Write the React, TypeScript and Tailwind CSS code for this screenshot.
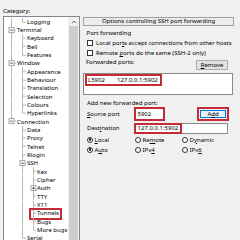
import React from "react";

type Line = [number, "f" | "t"];
type Row = { label: string; level: 0 | 1 | 2; exp?: "-" | "+"; lines: Line[]; mark?: boolean };

// tree columns, relative to the inside of the tree box
const L0 = 7;
const L1 = 18;
const L2 = 29;
const TEXT_X = [13, 23, 33];
const LEVEL_X = [L0, L1, L2];
const ROW_H = 8.33;

const rows: Row[] = [
  { label: "Logging", level: 1, lines: [[L0, "f"], [L1, "t"]] },
  { label: "Terminal", level: 0, exp: "-", lines: [[L0, "f"]] },
  { label: "Keyboard", level: 1, lines: [[L0, "f"], [L1, "f"]] },
  { label: "Bell", level: 1, lines: [[L0, "f"], [L1, "f"]] },
  { label: "Features", level: 1, lines: [[L0, "f"], [L1, "t"]] },
  { label: "Window", level: 0, exp: "-", lines: [[L0, "f"]] },
  { label: "Appearance", level: 1, lines: [[L0, "f"], [L1, "f"]] },
  { label: "Behaviour", level: 1, lines: [[L0, "f"], [L1, "f"]] },
  { label: "Translation", level: 1, lines: [[L0, "f"], [L1, "f"]] },
  { label: "Selection", level: 1, lines: [[L0, "f"], [L1, "f"]] },
  { label: "Colours", level: 1, lines: [[L0, "f"], [L1, "f"]] },
  { label: "Hyperlinks", level: 1, lines: [[L0, "f"], [L1, "t"]] },
  { label: "Connection", level: 0, exp: "-", lines: [[L0, "t"]] },
  { label: "Data", level: 1, lines: [[L1, "f"]] },
  { label: "Proxy", level: 1, lines: [[L1, "f"]] },
  { label: "Telnet", level: 1, lines: [[L1, "f"]] },
  { label: "Rlogin", level: 1, lines: [[L1, "f"]] },
  { label: "SSH", level: 1, exp: "-", lines: [[L1, "f"]] },
  { label: "Kex", level: 2, lines: [[L1, "f"], [L2, "f"]] },
  { label: "Cipher", level: 2, lines: [[L1, "f"], [L2, "f"]] },
  { label: "Auth", level: 2, exp: "+", lines: [[L1, "f"], [L2, "f"]] },
  { label: "TTY", level: 2, lines: [[L1, "f"], [L2, "f"]] },
  { label: "X11", level: 2, lines: [[L1, "f"], [L2, "f"]] },
  { label: "Tunnels", level: 2, lines: [[L1, "f"], [L2, "f"]], mark: true },
  { label: "Bugs", level: 2, lines: [[L1, "f"], [L2, "f"]] },
  { label: "More bugs", level: 2, lines: [[L1, "f"], [L2, "t"]] },
  { label: "Serial", level: 1, lines: [[L1, "t"]] },
];

function TreeRow({ row }: { row: Row }) {
  const w = TEXT_X[row.level];
  const x = LEVEL_X[row.level];
  const c = ROW_H / 2;
  return (
    <div className="relative flex h-[8.33px] items-center">
      <svg width={w} height={ROW_H} className="shrink-0">
        {row.lines.map(([lx, t], i) => (
          <line key={i} x1={lx + 0.5} x2={lx + 0.5} y1={0} y2={t === "f" ? ROW_H : c} stroke="#b9b9b9" strokeWidth={1} />
        ))}
        <line x1={row.exp ? x + 3 : x + 0.5} x2={w - 1} y1={c} y2={c} stroke="#b9b9b9" strokeWidth={1} />
        {row.exp && (
          <g>
            <rect x={x - 2} y={c - 2.5} width={5} height={5} fill="#fff" stroke="#8f8f8f" strokeWidth={0.8} />
            <line x1={x - 0.8} x2={x + 1.8} y1={c} y2={c} stroke="#333" strokeWidth={0.8} />
            {row.exp === "+" && <line x1={x + 0.5} x2={x + 0.5} y1={c - 1.3} y2={c + 1.3} stroke="#333" strokeWidth={0.8} />}
          </g>
        )}
      </svg>
      <span className="whitespace-nowrap leading-none">{row.label}</span>
      {row.mark && <div className="absolute left-[25px] top-[-1.5px] h-[12px] w-[33px] border-2 border-[#c42b35]" />}
    </div>
  );
}

function Check({ children }: { children: React.ReactNode }) {
  return (
    <div className="mt-[2px] flex h-[8px] items-center pl-[4px]">
      <div className="h-[6px] w-[6px] shrink-0 border border-[#333] bg-white" />
      <span className="ml-[3px] whitespace-nowrap leading-none">{children}</span>
    </div>
  );
}

function Radio({ on, children }: { on?: boolean; children: React.ReactNode }) {
  return (
    <div className="flex items-center">
      <div className="flex h-[6px] w-[6px] shrink-0 items-center justify-center rounded-full border border-[#333] bg-white">
        {on && <div className="h-[2.5px] w-[2.5px] rounded-full bg-[#222]" />}
      </div>
      <span className="ml-[1.5px] whitespace-nowrap leading-none">{children}</span>
    </div>
  );
}

export default function App() {
  return (
    <div className="flex h-[240px] w-[240px] overflow-hidden bg-[#f0f0f0] font-['Noto_Sans',sans-serif] text-[6px] text-black">
      {/* category tree */}
      <div className="flex w-[81px] shrink-0 flex-col pl-[3px]">
        <div className="mt-[1px] h-[1px] w-[77px] bg-[#d6d6d6]" />
        <div className="mt-[6px] h-[8px] leading-[8px]">Category:</div>
        <div className="mt-[1px] flex h-[240px] w-[77px] border border-[#828790] bg-white">
          <div className="flex w-[64px] flex-col overflow-hidden pt-[0.5px]">
            {rows.map((r) => (
              <TreeRow key={r.label} row={r} />
            ))}
          </div>
          <div className="flex w-[11px] flex-col bg-[#f0f0f0]">
            <div className="flex h-[9px] items-center justify-center">
              <svg width="6" height="4" viewBox="0 0 6 4">
                <path d="M0.8 3.2 L3 1 L5.2 3.2" fill="none" stroke="#606060" strokeWidth="0.9" />
              </svg>
            </div>
            <div className="mx-[1px] flex-1 bg-[#cdcdcd]" />
          </div>
        </div>
      </div>

      {/* tunnels panel */}
      <div className="ml-[2px] flex w-[151px] flex-col">
        <div className="mt-[17px] flex h-[8.5px] items-center justify-center border border-[#a0a0a0] bg-[#ececec] leading-none whitespace-nowrap">
          Options controlling SSH port forwarding
        </div>
        <div className="mt-[3.5px] h-[8px] pl-[3.5px] leading-[8px]">Port forwarding</div>
        <Check>
          Local por<u>t</u>s accept connections from other hosts
        </Check>
        <Check>
          Remote <u>p</u>orts do the same (SSH-2 only)
        </Check>

        <div className="flex h-[13px] items-start justify-between">
          <div className="mt-[1px] h-[8px] pl-[3px] leading-[8px]">Forwarded ports:</div>
          <div className="mr-[6px] mt-[3px] flex h-[10px] w-[32px] items-center justify-center border border-[#adadad] bg-[#e1e1e1] leading-none">
            <u>R</u>emove
          </div>
        </div>

        <div className="mt-[3px] h-[22px] w-[150px] border border-[#8a8a8a] bg-white">
          <div className="ml-[1px] flex h-[12px] w-[77px] items-center border-2 border-[#c42b35] leading-none whitespace-nowrap">
            <span className="w-[30px] pl-[1px]">L5902</span>
            <span>127.0.0.1:5902</span>
          </div>
        </div>

        <div className="mt-[4px] h-[8px] pl-[4px] leading-[8px]">Add new forwarded port:</div>

        <div className="flex h-[14px] items-center">
          <div className="w-[51px] pl-[4px] leading-none">
            <u>S</u>ource port
          </div>
          <div className="flex h-[14px] w-[31px] items-center border-2 border-[#c42b35] bg-white pl-[1.5px] leading-none">5902</div>
          <div className="ml-[32px] flex h-[14px] w-[32px] items-center justify-center border-2 border-[#c42b35] p-[1px]">
            <div className="flex h-full w-full items-center justify-center border border-[#0078d7] bg-[#e5f1fb] leading-none">
              A<u>d</u>d
            </div>
          </div>
        </div>

        <div className="mt-[1.5px] flex h-[11px] items-center">
          <div className="w-[51px] pl-[4px] leading-none">
            Dest<u>i</u>nation
          </div>
          <div className="flex h-[11px] w-[94px] border border-[#8a8a8a] bg-white">
            <div className="-m-[1px] flex h-[11px] w-[48px] items-center border-2 border-[#c42b35] pl-[1.5px] leading-none">
              127.0.0.1:5902
            </div>
          </div>
        </div>

        <div className="mt-[2px] grid h-[8px] grid-cols-[48px_47px_48px] items-center pl-[4px]">
          <Radio on>
            <u>L</u>ocal
          </Radio>
          <Radio>
            Re<u>m</u>ote
          </Radio>
          <Radio>
            D<u>y</u>namic
          </Radio>
        </div>
        <div className="mt-[2px] grid h-[8px] grid-cols-[48px_47px_48px] items-center pl-[4px]">
          <Radio on>
            A<u>u</u>to
          </Radio>
          <Radio>
            IPv<u>4</u>
          </Radio>
          <Radio>
            IPv<u>6</u>
          </Radio>
        </div>
      </div>
    </div>
  );
}
